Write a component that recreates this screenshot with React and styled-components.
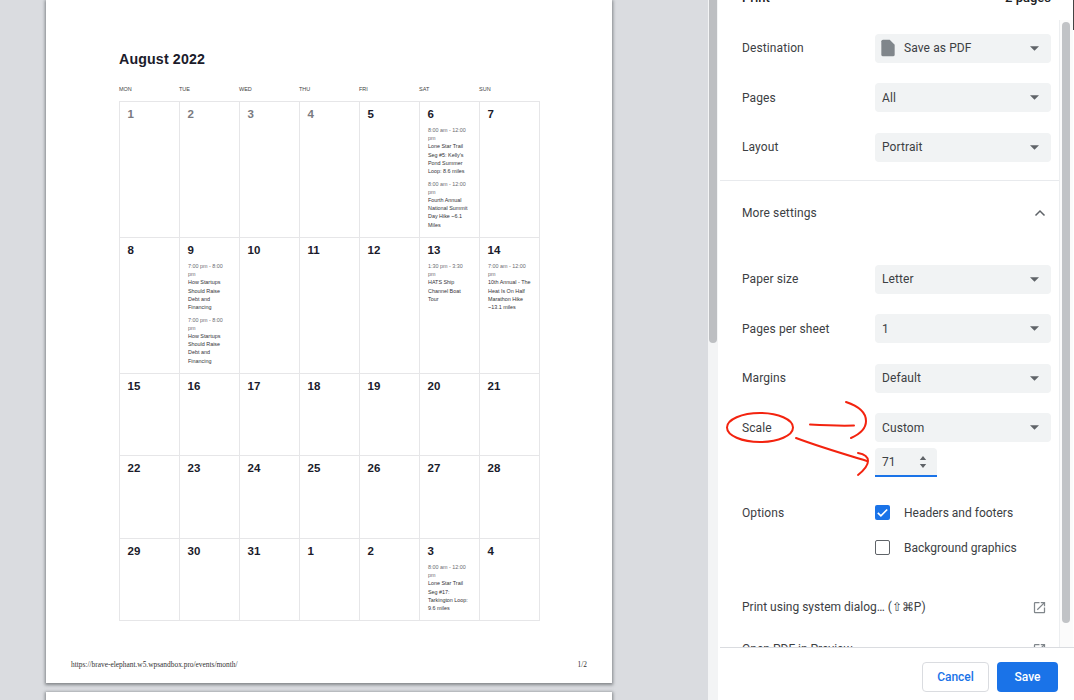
import React from "react";
import styled, { createGlobalStyle } from "styled-components";

const weekdays = ["MON", "TUE", "WED", "THU", "FRI", "SAT", "SUN"];

const summer = { time: "8:00 am - 12:00\npm", title: "Lone Star Trail\nSeg #5: Kelly's\nPond Summer\nLoop: 8.6 miles" };
const summit = { time: "8:00 am - 12:00\npm", title: "Fourth Annual\nNational Summit\nDay Hike ~6.1\nMiles" };
const startups = { time: "7:00 pm - 8:00\npm", title: "How Startups\nShould Raise\nDebt and\nFinancing" };
const ship = { time: "1:30 pm - 3:30\npm", title: "HATS Ship\nChannel Boat\nTour" };
const half = { time: "7:00 am - 12:00\npm", title: "10th Annual - The\nHeat Is On Half\nMarathon Hike\n~13.1 miles" };
const tarkington = { time: "8:00 am - 12:00\npm", title: "Lone Star Trail\nSeg #17:\nTarkington Loop:\n9.6 miles" };

const days = [
  { n: 1, muted: true }, { n: 2, muted: true }, { n: 3, muted: true }, { n: 4, muted: true },
  { n: 5 }, { n: 6, events: [summer, summit] }, { n: 7 },
  { n: 8 }, { n: 9, events: [startups, startups] }, { n: 10 }, { n: 11 }, { n: 12 },
  { n: 13, events: [ship] }, { n: 14, events: [half] },
  { n: 15 }, { n: 16 }, { n: 17 }, { n: 18 }, { n: 19 }, { n: 20 }, { n: 21 },
  { n: 22 }, { n: 23 }, { n: 24 }, { n: 25 }, { n: 26 }, { n: 27 }, { n: 28 },
  { n: 29 }, { n: 30 }, { n: 31 }, { n: 1 }, { n: 2 }, { n: 3, events: [tarkington] }, { n: 4 },
];

const Caret = () => (
  <CaretIcon viewBox="0 0 10 5">
    <path d="M0 0h10L5 5z" fill="#5f6368" />
  </CaretIcon>
);

const OpenIcon = () => (
  <LinkIcon viewBox="0 0 24 24">
    <path
      fill="#80868b"
      d="M19 19H5V5h7V3H5a2 2 0 0 0-2 2v14a2 2 0 0 0 2 2h14c1.1 0 2-.9 2-2v-7h-2v7zM14 3v2h3.59l-9.83 9.83 1.41 1.41L19 6.41V10h2V3h-7z"
    />
  </LinkIcon>
);

const Select = ({ children, icon }) => (
  <SelectBox>
    {icon}
    <SelectText>{children}</SelectText>
    <Caret />
  </SelectBox>
);

const App = () => {
  return (
    <>
      <GlobalStyle />
      <Window>
        <Preview>
          <PageList>
            <Page>
              <MonthTitle>August 2022</MonthTitle>
              <WeekRow>
                {weekdays.map((d) => (
                  <WeekDay key={d}>{d}</WeekDay>
                ))}
              </WeekRow>
              <Calendar>
                {days.map((d, i) => (
                  <Cell key={i}>
                    <DayNumber $muted={d.muted}>{d.n}</DayNumber>
                    {d.events &&
                      d.events.map((e, j) => (
                        <Event key={j}>
                          <EventTime>{e.time}</EventTime>
                          <EventTitle>{e.title}</EventTitle>
                        </Event>
                      ))}
                  </Cell>
                ))}
              </Calendar>
              <PageFooter>
                <span>https://brave-elephant.w5.wpsandbox.pro/events/month/</span>
                <span>1/2</span>
              </PageFooter>
            </Page>
            <Page />
          </PageList>
          <PreviewScroll>
            <PreviewThumb />
          </PreviewScroll>
        </Preview>

        <Panel>
          <PanelHeader>
            <PanelTitle>Print</PanelTitle>
            <PageCount>2 pages</PageCount>
          </PanelHeader>
          <PanelBody>
            <Settings>
              <Row>
                <Label>Destination</Label>
                <Select
                  icon={
                    <FileIcon viewBox="0 0 24 24">
                      <path fill="#80868b" d="M6 2a2 2 0 0 0-2 2v16a2 2 0 0 0 2 2h12a2 2 0 0 0 2-2V8l-6-6H6z" />
                    </FileIcon>
                  }
                >
                  Save as PDF
                </Select>
              </Row>
              <Row>
                <Label>Pages</Label>
                <Select>All</Select>
              </Row>
              <Row>
                <Label>Layout</Label>
                <Select>Portrait</Select>
              </Row>
              <Divider />
              <MoreRow>
                <Label>More settings</Label>
                <ChevronIcon viewBox="0 0 12 8">
                  <path d="M1.5 6.5L6 2l4.5 4.5" fill="none" stroke="#5f6368" strokeWidth="1.5" />
                </ChevronIcon>
              </MoreRow>
              <Row>
                <Label>Paper size</Label>
                <Select>Letter</Select>
              </Row>
              <Row>
                <Label>Pages per sheet</Label>
                <Select>1</Select>
              </Row>
              <Row>
                <Label>Margins</Label>
                <Select>Default</Select>
              </Row>
              <Row>
                <Label>Scale</Label>
                <Select>Custom</Select>
              </Row>
              <ScaleRow>
                <ScaleInput>
                  71
                  <Stepper viewBox="0 0 8 14">
                    <path d="M4 1l3.2 4H.8zM4 13L.8 9h6.4z" fill="#5f6368" />
                  </Stepper>
                </ScaleInput>
              </ScaleRow>
              <CheckRow>
                <Label>Options</Label>
                <CheckBox $checked>
                  <svg viewBox="0 0 16 16" width="15" height="15">
                    <path d="M3 8.3l3.3 3.3L13 4.8" fill="none" stroke="#fff" strokeWidth="1.8" />
                  </svg>
                </CheckBox>
                <CheckLabel>Headers and footers</CheckLabel>
              </CheckRow>
              <CheckRow>
                <Label />
                <CheckBox />
                <CheckLabel>Background graphics</CheckLabel>
              </CheckRow>
              <LinkRow $first>
                <span>Print using system dialog… (⇧⌘P)</span>
                <OpenIcon />
              </LinkRow>
              <LinkRow>
                <span>Open PDF in Preview</span>
                <OpenIcon />
              </LinkRow>
            </Settings>
            <PanelScroll>
              <PanelThumb />
            </PanelScroll>
          </PanelBody>
          <PanelFooter>
            <CancelButton>Cancel</CancelButton>
            <SaveButton>Save</SaveButton>
          </PanelFooter>
          <Annotations viewBox="0 0 354 700">
            <g fill="none" stroke="#f3230f" strokeWidth="2" strokeLinecap="round">
              <ellipse cx="40" cy="427.5" rx="33" ry="14.5" />
              <path d="M90 424.5c14 .8 30 1.4 44 1" />
              <path d="M126 402c12 4 20 10 20 19 0 7-6 13-15 17" />
              <path d="M76 438c24 9 48 16 71 23" />
              <path d="M138 453c6 1 10 4 10 8 0 5-5 10-10 14" />
            </g>
          </Annotations>
        </Panel>
      </Window>
    </>
  );
};

const GlobalStyle = createGlobalStyle`
  html, body {
    margin: 0;
    padding: 0;
    height: 100%;
    overflow: hidden;
    background: #dadce0;
  }
`;

const Window = styled.div`
  display: flex;
  width: 1074px;
  height: 700px;
  overflow: hidden;
`;

const Preview = styled.div`
  width: 720px;
  height: 700px;
  display: flex;
  justify-content: space-between;
  background: #dadce0;
`;

const PageList = styled.div`
  display: flex;
  flex-direction: column;
  gap: 9px;
  padding-left: 46px;
`;

const Page = styled.div`
  flex: none;
  box-sizing: border-box;
  width: 566px;
  height: 683px;
  padding: 51px 73px 0;
  background: #fff;
  box-shadow: 0 1px 3px 1px rgba(60, 64, 67, 0.55);
  font-family: "Liberation Sans", Arial, sans-serif;
`;

const MonthTitle = styled.h1`
  margin: 0;
  font-size: 14.2px;
  line-height: 17px;
  font-weight: 700;
  letter-spacing: 0.15px;
  color: #1b1b2b;
`;

const WeekRow = styled.div`
  display: grid;
  grid-template-columns: repeat(7, 60px);
  margin-top: 17px;
  height: 16px;
`;

const WeekDay = styled.span`
  font-size: 5.5px;
  line-height: 8px;
  color: #444;
`;

const Calendar = styled.div`
  display: grid;
  box-sizing: border-box;
  width: 421px;
  grid-template-columns: repeat(7, 60px);
  grid-template-rows: 136px 136px 82px 83px 82px;
  border-top: 1px solid #e6e6e8;
  border-left: 1px solid #e6e6e8;
`;

const Cell = styled.div`
  box-sizing: border-box;
  padding: 5px 8px 0;
  border-right: 1px solid #e6e6e8;
  border-bottom: 1px solid #e6e6e8;
`;

const DayNumber = styled.div`
  height: 14px;
  margin: 0 0 5px -0.5px;
  font-size: 11.5px;
  line-height: 14px;
  font-weight: 700;
  color: ${(props) => (props.$muted ? "#7a7a80" : "#1b1b2b")};
`;

const Event = styled.div`
  margin-bottom: 4.4px;
  font-size: 5.4px;
  line-height: 8.2px;
  white-space: pre-line;
`;

const EventTime = styled.div`
  color: #6b6b70;
`;

const EventTitle = styled.div`
  color: #333338;
`;

const PageFooter = styled.div`
  display: flex;
  justify-content: space-between;
  margin: 39px -49px 0;
  padding: 0 1px;
  font-family: "Liberation Serif", "Times New Roman", serif;
  font-size: 7.4px;
  line-height: 10px;
  color: #333;
`;

const PreviewScroll = styled.div`
  box-sizing: border-box;
  width: 12px;
  background: #f3f4f5;
  border-right: 2px solid #fff;
`;

const PreviewThumb = styled.div`
  width: 8px;
  height: 343px;
  margin-left: 1px;
  background: #bdbfc2;
  border-radius: 0 0 4px 4px;
`;

const Panel = styled.div`
  position: relative;
  flex: none;
  width: 354px;
  height: 700px;
  display: flex;
  flex-direction: column;
  background: #fff;
  font-family: Roboto, "Noto Sans", sans-serif;
  font-size: 12px;
  color: #3c4043;
  &::after {
    content: "";
    position: absolute;
    top: 0;
    right: 0;
    width: 1px;
    height: 30px;
    background: #444;
  }
`;

const PanelHeader = styled.div`
  flex: none;
  display: flex;
  justify-content: space-between;
  align-items: center;
  height: 20px;
  margin-top: -13px;
  padding: 0 23px 0 22px;
  font-weight: 500;
  color: #202124;
`;

const PanelTitle = styled.span`
  font-size: 13px;
`;

const PageCount = styled.span`
  font-size: 13px;
`;

const PanelBody = styled.div`
  flex: 1;
  min-height: 0;
  display: flex;
  overflow: hidden;
`;

const Settings = styled.div`
  flex: 1;
  min-width: 0;
`;

const Row = styled.div`
  display: flex;
  align-items: center;
  height: 49.4px;
  padding-left: 22px;
  &:first-child {
    margin-top: 16.7px;
  }
`;

const Label = styled.span`
  flex: none;
  width: 133px;
  letter-spacing: 0.1px;
`;

const SelectBox = styled.div`
  display: flex;
  align-items: center;
  box-sizing: border-box;
  width: 176px;
  height: 29px;
  padding: 0 12px 0 7px;
  background: #f1f3f4;
  border-radius: 4px;
`;

const SelectText = styled.span`
  flex: 1;
  letter-spacing: 0.1px;
`;

const CaretIcon = styled.svg`
  width: 9px;
  height: 5px;
`;

const FileIcon = styled.svg`
  flex: none;
  width: 20px;
  height: 20px;
  margin: 0 6px 0 -4px;
`;

const Divider = styled.div`
  height: 1px;
  margin: 8px 0 0;
  background: #e8eaed;
`;

const MoreRow = styled.div`
  display: flex;
  align-items: center;
  justify-content: space-between;
  height: 65px;
  padding: 0 13px 0 22px;
  margin-bottom: 8.8px;
`;

const ChevronIcon = styled.svg`
  width: 12px;
  height: 8px;
`;

const ScaleRow = styled.div`
  display: flex;
  height: 46.8px;
  padding-left: 155px;
  margin-top: -4px;
`;

const ScaleInput = styled.div`
  display: flex;
  align-items: center;
  justify-content: space-between;
  box-sizing: border-box;
  width: 62px;
  height: 29px;
  padding: 0 10px 0 7px;
  background: #f1f3f4;
  border-bottom: 2px solid #1a73e8;
  border-radius: 4px 4px 0 0;
`;

const Stepper = styled.svg`
  width: 8px;
  height: 14px;
`;

const CheckRow = styled.div`
  display: flex;
  align-items: center;
  height: 35px;
  padding-left: 22px;
`;

const CheckBox = styled.div`
  box-sizing: border-box;
  flex: none;
  display: flex;
  align-items: center;
  justify-content: center;
  width: 15px;
  height: 15px;
  margin-right: 14px;
  border-radius: 2px;
  background: ${(props) => (props.$checked ? "#1a73e8" : "#fff")};
  border: ${(props) => (props.$checked ? "none" : "1.5px solid #5f6368")};
`;

const CheckLabel = styled.span``;

const LinkRow = styled.div`
  display: flex;
  align-items: center;
  justify-content: space-between;
  height: 42px;
  padding: 0 12px 0 22px;
  margin-top: ${(props) => (props.$first ? "21px" : "0")};
`;

const LinkIcon = styled.svg`
  width: 15px;
  height: 15px;
`;

const PanelScroll = styled.div`
  flex: none;
  width: 13px;
  margin: 13px 1px 0 0;
  padding-top: 2px;
  background: #fbfbfb;
  border-left: 1px solid #eceef0;
`;

const PanelThumb = styled.div`
  width: 8px;
  height: 601px;
  margin-left: 2px;
  background: #c1c3c6;
  border-radius: 4px;
`;

const PanelFooter = styled.div`
  flex: none;
  display: flex;
  justify-content: flex-end;
  gap: 8px;
  box-sizing: border-box;
  height: 53px;
  padding: 14px 16px 0 0;
  background: #fff;
  border-top: 1px solid #dadce0;
`;

const CancelButton = styled.button`
  width: 67px;
  height: 30px;
  padding: 0;
  border: 1px solid #dadce0;
  border-radius: 4px;
  background: #fff;
  color: #1a73e8;
  font: 500 12px Roboto, sans-serif;
`;

const SaveButton = styled.button`
  width: 61px;
  height: 30px;
  padding: 0;
  border: none;
  border-radius: 4px;
  background: #1a73e8;
  color: #fff;
  font: 500 12px Roboto, sans-serif;
`;

const Annotations = styled.svg`
  position: absolute;
  top: 0;
  left: 0;
  width: 354px;
  height: 700px;
  pointer-events: none;
`;

export default App;
